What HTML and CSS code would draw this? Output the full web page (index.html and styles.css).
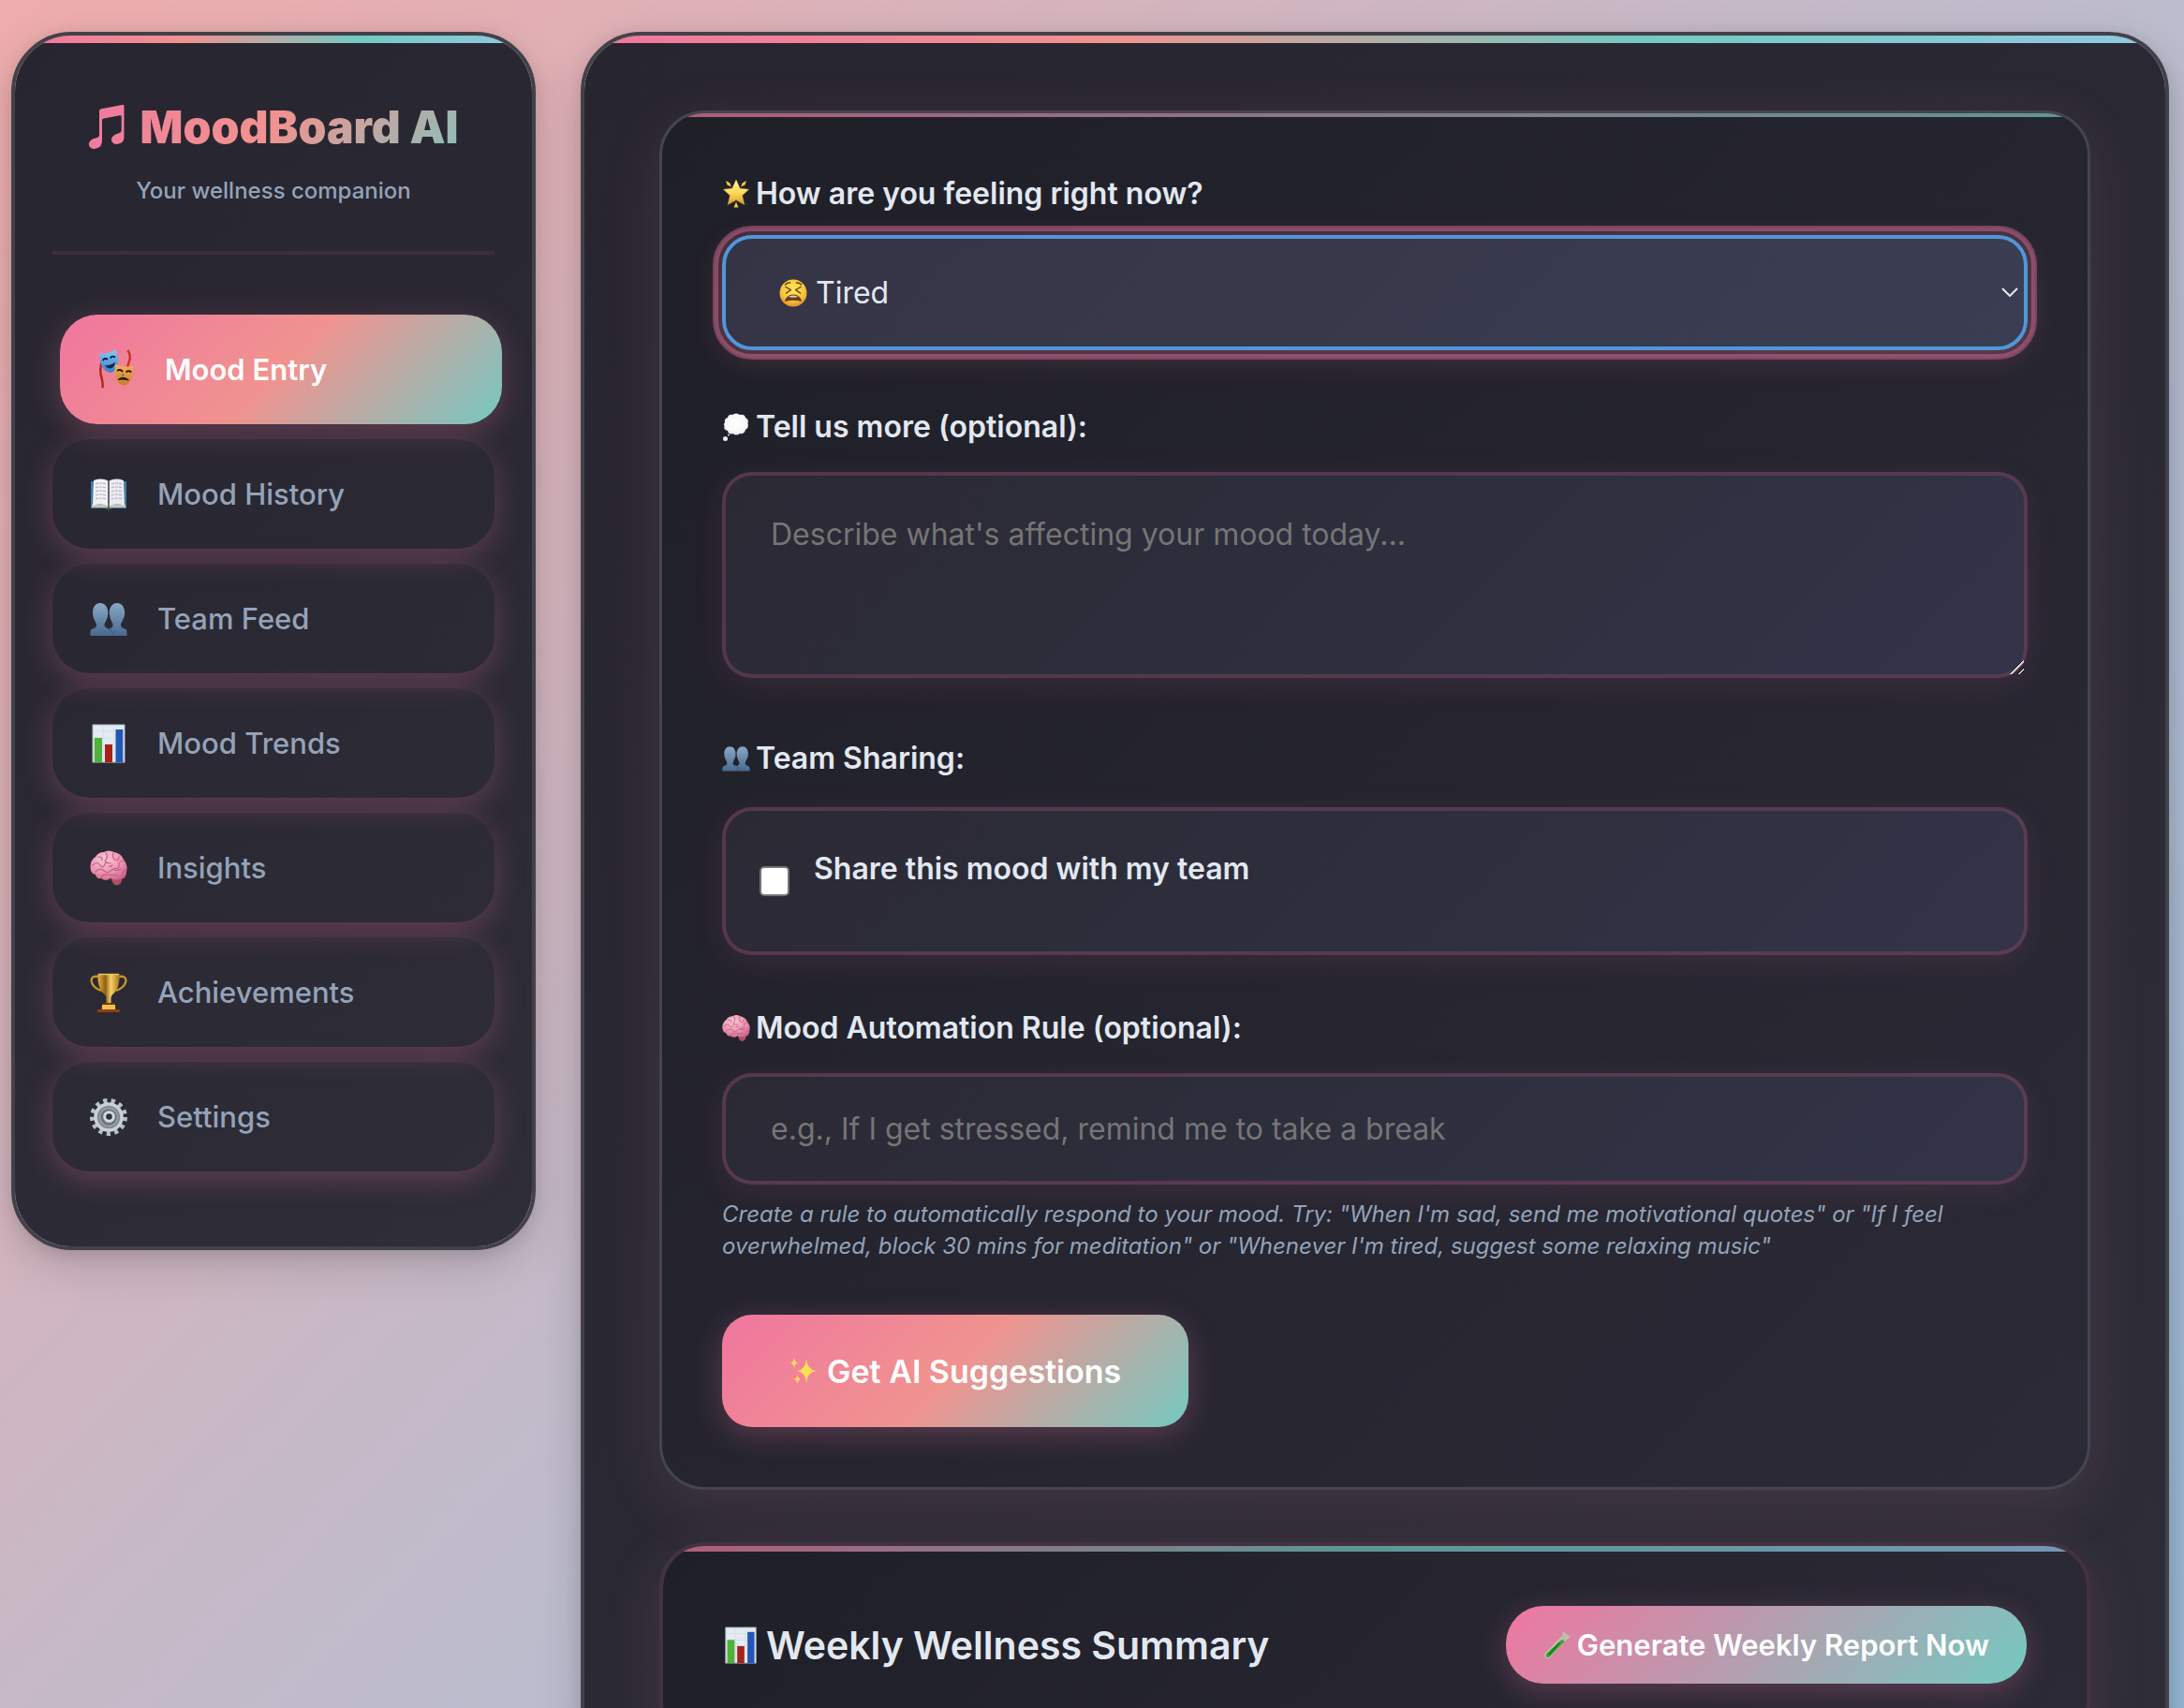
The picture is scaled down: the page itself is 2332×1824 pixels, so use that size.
FILE: index.html
```html
<!DOCTYPE html>
<html lang="en">
<head>
<meta charset="utf-8">
<title>MoodBoard AI</title>
<link rel="stylesheet" href="styles.css">
</head>
<body>
<svg class="sprite" aria-hidden="true">
  <defs>
    <linearGradient id="gold" x1="0" y1="0" x2="0" y2="1"><stop offset="0" stop-color="#fff7a8"/><stop offset=".5" stop-color="#fbdc5c"/><stop offset="1" stop-color="#e39a2c"/></linearGradient>
    <linearGradient id="cup" x1="0" y1="0" x2="1" y2="0"><stop offset="0" stop-color="#e8b53a"/><stop offset=".35" stop-color="#8f5f12"/><stop offset=".6" stop-color="#f6d264"/><stop offset="1" stop-color="#a8741a"/></linearGradient>
    <linearGradient id="steel" x1="0" y1="0" x2="0" y2="1"><stop offset="0" stop-color="#89a9c6"/><stop offset="1" stop-color="#48688f"/></linearGradient>
    <linearGradient id="maskBlue" x1="0" y1="0" x2="0" y2="1"><stop offset="0" stop-color="#8cc8f4"/><stop offset="1" stop-color="#2f7fd0"/></linearGradient>
    <linearGradient id="maskGold" x1="0" y1="0" x2="0" y2="1"><stop offset="0" stop-color="#f3b757"/><stop offset="1" stop-color="#c97a26"/></linearGradient>
    <radialGradient id="face" cx=".5" cy=".35" r=".7"><stop offset="0" stop-color="#ffe957"/><stop offset=".6" stop-color="#f8c63d"/><stop offset="1" stop-color="#dc8527"/></radialGradient>
    <radialGradient id="pinkBrain" cx=".4" cy=".3" r=".8"><stop offset="0" stop-color="#fbc6d8"/><stop offset=".6" stop-color="#ec90ae"/><stop offset="1" stop-color="#c65d83"/></radialGradient>
    <radialGradient id="cloud" cx=".5" cy=".45" r=".6"><stop offset="0" stop-color="#ffffff"/><stop offset=".75" stop-color="#f6f6f8"/><stop offset="1" stop-color="#c9cbd2"/></radialGradient>
    <linearGradient id="noteFill" x1="0" y1="0" x2="1" y2="1"><stop offset="0" stop-color="#ef7aa0"/><stop offset="1" stop-color="#f07f9b"/></linearGradient>
  </defs>
  <symbol id="i-note" viewBox="0 0 40 50">
    <path fill="url(#noteFill)" d="M12 7.500Q12 5.600 14 5.200L36.500.900Q38.500.600 38.500 2.500V35Q38.500 40 35 41.800Q30.500 44 27 42Q24 39.800 25.500 36Q27.500 32.500 32 31.500Q35.700 30.800 35.700 28V13.300Q35.700 11.900 34 12.200L16.600 15.600Q15 15.900 15 17.500V38.500Q15 44.500 11 46.800Q6.500 49 3 47Q-.200 44.500 1.300 41Q3.500 37.500 8 36.600Q12 35.800 12 33Z"/>
  </symbol>
  <symbol id="i-masks" viewBox="0 0 40 46">
    <path d="M4.500 13Q1 22 3.500 31T4.500 43" fill="none" stroke="#b3271d" stroke-width="2.600"/>
    <path d="M33 1Q37 8 34.500 14T34 20" fill="none" stroke="#c93428" stroke-width="2.600"/>
    <path d="M1.500 5Q10 5.500 19.500.500Q23 8 22 16Q20 25 14.500 26Q8 25.500 4 19Q1 12 1.500 5Z" fill="url(#maskBlue)"/>
    <path d="M5 12.500Q7.500 9 10.500 11.500M13.500 10Q15.500 6.500 19 9" fill="none" stroke="#0e1c34" stroke-width="2"/>
    <path d="M7.500 17.500Q13 19.500 19 14.500Q18 21 13.500 21.500Q9.500 21.500 7.500 17.500Z" fill="#14253f"/>
    <path d="M19 17Q29 21.500 39 18.500Q39.500 27 36.500 34Q32.500 41 27 40Q20.500 38 19 29Q18 22 19 17Z" fill="url(#maskGold)"/>
    <path d="M21 24Q24.500 21.500 27.500 25M31 25.500Q34 23 37 25.500" fill="none" stroke="#2b1606" stroke-width="2"/>
    <path d="M22.500 34Q27.500 29 34 34.500Q27.500 32.500 22.500 34Z" fill="#2b1606" stroke="#2b1606" stroke-width="1.200"/>
    <path d="M28 27.500L27 30" stroke="#7d4915" stroke-width="1.200"/>
  </symbol>
  <symbol id="i-book" viewBox="0 0 40 40">
    <path d="M1 6H39V35H23Q20 38 17 35H1Z" fill="#3f7ba8"/>
    <path d="M2 31H38V34H23Q20 36.500 17 34H2Z" fill="#c9c3b2"/>
    <path d="M4 5Q13 2 19.500 5.500V32.500Q13 29 3 32Z" fill="#f2f1f4"/>
    <path d="M36 5Q27 2 20.500 5.500V32.500Q27 29 37 32Z" fill="#eceaf0"/>
    <path d="M20 5.500V33" stroke="#55535c" stroke-width="1.600"/>
    <path d="M6 9Q11 7 17 9M6 13Q11 11 17 13M6 17Q11 15 17 17M6 21Q11 19 17 21M6 25Q11 23 17 25M23 9Q29 7 34 9M23 13Q29 11 34 13M23 17Q29 15 34 17M23 21Q29 19 34 21M23 25Q29 23 34 25" fill="none" stroke="#b5b3bd" stroke-width="1.200" stroke-dasharray="3 1"/>
    <circle cx="20" cy="35" r="1.800" fill="#54451c"/>
  </symbol>
  <symbol id="i-people" viewBox="0 0 40 40">
    <path fill="url(#steel)" d="M11 3C6 3 2.800 7.500 3 14C3.200 19 5.500 22 7 25.500Q7.500 29 3.500 30.200Q.500 31 .500 34V38H22V34Q22 31 19.500 30.200Q15 29 15.500 25.500C17 22 19.200 19 19.400 14C19.500 7.500 16 3 11 3Z"/>
    <path fill="url(#steel)" d="M29 3C24 3 20.600 7.500 20.800 14C21 19 23 22 24.500 25.500Q25 29 21.500 30.200Q20 30.600 19.500 31.400Q22 33 22 35V38H39.500V34Q39.500 31 36.500 30.200Q32.500 29 33 25.500C34.500 22 37 19 37.200 14C37.400 7.500 34 3 29 3Z"/>
    <path d="M19 31Q24 32 25.500 36" fill="none" stroke="#3a5577" stroke-width=".800"/>
  </symbol>
  <symbol id="i-chart" viewBox="0 0 40 42">
    <rect x="3" y="1" width="34" height="40" fill="#e3ebf3" stroke="#aeb7c2" stroke-width="1"/>
    <path d="M3 8H37M3 15H37M3 22H37M3 29H37M14 1V41M25.500 1V41" stroke="#cfdae5" stroke-width=".700"/>
    <rect x="4.800" y="15" width="8.200" height="26" fill="#50b23a"/>
    <rect x="16" y="22" width="8" height="19" fill="#a82219"/>
    <rect x="27.500" y="6" width="7.800" height="35" fill="#2257b8"/>
  </symbol>
  <symbol id="i-brain" viewBox="0 0 40 40">
    <path d="M23 32Q29 27 34 30Q35 38 28 38.500Q24 37 23 32Z" fill="#b04f62"/>
    <path d="M.500 20Q0 12 6 8Q9 3 15 3Q20-.200 26 3Q33 4 36 11Q41 17 39 24Q39 31 33 32Q26 34 22 31Q17 35 12 31Q7 32 6 27Q1 26 .500 20Z" fill="url(#pinkBrain)"/>
    <path d="M3 17Q8 12 11 17T17 14M9 8Q14 8 13 12M17 4Q20 8 17 11T22 15M25 4Q23 9 27 11T31 8M36 12Q31 12 31 17T26 20M6 24Q10 19 15 23T24 21Q28 24 33 21M38 22Q34 24 35 28M12 30Q13 26 19 27T29 27M20 18Q22 19 24 17" fill="none" stroke="#bd6285" stroke-width="1.200" stroke-linecap="round"/>
  </symbol>
  <symbol id="i-trophy" viewBox="0 0 40 42">
    <path d="M9 4Q2 2.500 1.500 8Q2 15 12 19M31 4Q38 2.500 38.500 8Q38 15 28 19" fill="none" stroke="#c8932a" stroke-width="2.400"/>
    <path d="M8.500 1H31.500Q32 15 26.500 21Q22.500 24 22.500 27V33H17.500V27Q17.500 24 13.500 21Q8 15 8.500 1Z" fill="url(#cup)"/>
    <path d="M9 1.500H31" stroke="#f0c65a" stroke-width="1.500"/>
    <path d="M14 32H26L29 40H11Z" fill="#7a3413"/>
    <rect x="13" y="34" width="14" height="5" fill="#f0c04c"/>
    <rect x="8" y="39" width="24" height="3" rx="1" fill="#8b4016"/>
  </symbol>
  <symbol id="i-gear" viewBox="0 0 40 40">
    <circle cx="20" cy="20" r="17.500" fill="none" stroke="#b6c1c9" stroke-width="5" stroke-dasharray="4.200 4.258"/>
    <circle cx="20" cy="20" r="14" fill="#838b91" stroke="#c9d1d7" stroke-width="3.500"/>
    <circle cx="20" cy="20" r="9.500" fill="#6d757b" stroke="#99a2a9" stroke-width="1.500"/>
    <circle cx="20.500" cy="19.500" r="4.800" fill="#2f343b" stroke="#d4dbe0" stroke-width="3"/>
  </symbol>
  <symbol id="i-star" viewBox="0 0 30 32">
    <path d="M15 1L19.200 10.200L28.500 11.300L21.500 17.800L23.800 27.500L15 22.600L6.200 27.500L8.500 17.800L1.500 11.300L10.800 10.200Z" fill="url(#gold)" stroke="#e9b53c" stroke-width=".500" stroke-linejoin="round"/>
    <path d="M4 2L8.500 4.500L9.800 8.500L5.500 6.500ZM26 2L21.500 4.500L20.200 8.500L24.500 6.500ZM15 24.500L17.500 30.500H12.500Z" fill="#f3c646"/>
  </symbol>
  <symbol id="i-thought" viewBox="0 0 30 32">
    <path d="M3 11Q2 7 6 6Q7 2 11 3Q15 0 19 3Q24 2 25 6Q29 8 27.500 12Q29 17 25 19Q24 24 19 23Q15 26 11.500 23Q7 25 6 20Q1 19 2.500 15Q1 13 3 11Z" fill="url(#cloud)"/>
    <circle cx="3.500" cy="28.500" r="2.500" fill="#ececf0"/><circle cx="7" cy="24.500" r="1" fill="#dddde2"/>
  </symbol>
  <symbol id="i-tired" viewBox="0 0 30 30">
    <circle cx="15" cy="15" r="14.500" fill="url(#face)"/>
    <path d="M7 8.500L12.500 11.500L7.500 15M23 8.500L17.500 11.500L22.500 15M6.500 6Q9 3.500 11.500 4M23.500 6Q21 3.500 18.500 4" fill="none" stroke="#5d330b" stroke-width="1.400" stroke-linecap="round" stroke-linejoin="round"/>
    <path d="M6 24Q7.500 16.500 15 16.500T24 24Q15 21.500 6 24Z" fill="#6b3b14"/>
    <path d="M9.500 19Q15 16 20.500 19Q15 20.500 9.500 19Z" fill="#c9cfdb"/>
  </symbol>
  <symbol id="i-sparkles" viewBox="0 0 30 30">
    <path d="M18 2Q18.800 13.500 28.500 15Q18.800 16.500 18 28Q17.200 16.500 8 15Q17.200 13.500 18 2ZM5 1Q5.500 5.500 9 6.500Q5.500 7.500 5 12Q4.500 7.500 1 6.500Q4.500 5.500 5 1ZM8.500 19Q9 23 12 24Q9 25 8.500 29Q8 25 5 24Q8 23 8.500 19Z" fill="#fcdf58"/>
  </symbol>
  <symbol id="i-tube" viewBox="0 0 30 30">
    <path d="M22.500 3L27 6L7 27.500Q4.500 29.500 2.500 28Q1 26 2.500 23.500Z" fill="#a9d6a6" fill-opacity=".7" stroke="#cfe3d0" stroke-width=".700"/>
    <path d="M19.500 9L23 10.500L7 27Q4.500 28.800 3 27.500Q2 26 3.200 24Z" fill="#35a52f"/>
    <path d="M17 12.500L6 25" stroke="#1f6f1f" stroke-width="1.600"/>
    <path d="M21 1.500L28 6.500" stroke="#c3b9c0" stroke-width="1.600" stroke-linecap="round"/>
  </symbol>
</svg>

<div class="layout">
  <aside class="sidebar">
    <header class="brand">
      <h1 class="brand-title"><svg class="brand-note" aria-hidden="true"><use href="#i-note"/></svg>MoodBoard AI</h1>
      <p class="brand-tagline">Your wellness companion</p>
    </header>
    <nav class="nav">
      <button type="button" class="nav-item active"><svg class="nav-icon" aria-hidden="true"><use href="#i-masks"/></svg>Mood Entry</button>
      <button type="button" class="nav-item"><svg class="nav-icon" aria-hidden="true"><use href="#i-book"/></svg>Mood History</button>
      <button type="button" class="nav-item"><svg class="nav-icon" aria-hidden="true"><use href="#i-people"/></svg>Team Feed</button>
      <button type="button" class="nav-item"><svg class="nav-icon" aria-hidden="true"><use href="#i-chart"/></svg>Mood Trends</button>
      <button type="button" class="nav-item"><svg class="nav-icon" aria-hidden="true"><use href="#i-brain"/></svg>Insights</button>
      <button type="button" class="nav-item"><svg class="nav-icon" aria-hidden="true"><use href="#i-trophy"/></svg>Achievements</button>
      <button type="button" class="nav-item"><svg class="nav-icon" aria-hidden="true"><use href="#i-gear"/></svg>Settings</button>
    </nav>
  </aside>

  <main class="main">
    <form class="card entry">
      <div class="field field-mood">
        <label class="label" for="mood"><svg class="label-icon" aria-hidden="true"><use href="#i-star"/></svg>How are you feeling right now?</label>
        <div class="select-wrap">
          <select id="mood" class="control select">
            <option>Tired</option>
            <option>Happy</option>
            <option>Calm</option>
            <option>Stressed</option>
          </select>
          <svg class="select-face" aria-hidden="true"><use href="#i-tired"/></svg>
          <svg class="select-arrow" viewBox="0 0 18 10" aria-hidden="true"><path d="M1 1L9 9L17 1" fill="none" stroke="#e2e8f0" stroke-width="2"/></svg>
        </div>
      </div>

      <div class="field field-notes">
        <label class="label" for="notes"><svg class="label-icon" aria-hidden="true"><use href="#i-thought"/></svg>Tell us more (optional):</label>
        <textarea id="notes" class="control textarea" placeholder="Describe what's affecting your mood today..."></textarea>
      </div>

      <fieldset class="field field-share">
        <legend class="label"><svg class="label-icon" aria-hidden="true"><use href="#i-people"/></svg>Team Sharing:</legend>
        <div class="control share">
          <input id="share" class="checkbox" type="checkbox">
          <label class="share-label" for="share">Share this mood with my team</label>
        </div>
      </fieldset>

      <div class="field field-rule">
        <label class="label" for="rule"><svg class="label-icon" aria-hidden="true"><use href="#i-brain"/></svg>Mood Automation Rule (optional):</label>
        <input id="rule" class="control input" type="text" placeholder="e.g., If I get stressed, remind me to take a break">
        <p class="hint">Create a rule to automatically respond to your mood. Try: "When I'm sad, send me motivational quotes" or "If I feel overwhelmed, block 30 mins for meditation" or "Whenever I'm tired, suggest some relaxing music"</p>
      </div>

      <button type="button" class="submit"><svg class="label-icon" aria-hidden="true"><use href="#i-sparkles"/></svg>Get AI Suggestions</button>
    </form>

    <section class="card summary">
      <h2 class="summary-title"><svg class="summary-icon" aria-hidden="true"><use href="#i-chart"/></svg>Weekly Wellness Summary</h2>
      <button type="button" class="report"><svg class="label-icon" aria-hidden="true"><use href="#i-tube"/></svg>Generate Weekly Report Now</button>
    </section>
  </main>
</div>
</body>
</html>
```
FILE: styles.css
```css
:root {
  --pink: #f0769f;
  --peach: #f0938f;
  --teal: #74c9c1;
  --sky: #92c8e2;
  --text: #e2e8f0;
  --muted: #94a3b8;
  --glow: rgba(240, 118, 160, .27);
  --glow-soft: rgba(240, 118, 160, .1);
  --edge: rgba(240, 118, 175, .25);
}

* { box-sizing: border-box; }

body {
  margin: 0;
  color: var(--text);
  font-family: Inter, "Liberation Sans", sans-serif;
  background: linear-gradient(135deg, #efacac 0%, #bdbccd 55%, #96b7d4 100%) fixed;
}

button, input, select, textarea { font-family: inherit; }

.sprite { position: absolute; width: 0; height: 0; }

.layout {
  display: flex;
  align-items: flex-start;
  gap: 48px;
  height: 100vh;
  padding: 34px 16px 0 12px;
  overflow: hidden;
}

.sidebar, .main {
  position: relative;
  border: 4px solid #424149;
  border-radius: 64px;
  background: linear-gradient(135deg, #27252f, #2e2d38);
  background-clip: padding-box;
  box-shadow: 0 16px 48px rgba(0, 0, 0, .16), 0 4px 16px rgba(0, 0, 0, .1);
  overflow: hidden;
}

.sidebar::before, .main::before, .card::before {
  content: "";
  position: absolute;
  inset: 0 0 auto;
  height: 8px;
  background: linear-gradient(90deg, var(--pink), var(--peach), var(--teal), var(--sky));
}

.sidebar { flex: 0 0 560px; padding: 56px 40px 80px; }

.brand {
  padding-bottom: 46px;
  border-bottom: 4px solid #3e2e3d;
  text-align: center;
}

.brand-title {
  display: flex;
  align-items: center;
  justify-content: center;
  gap: 15px;
  margin: 0;
  font-size: 48px;
  line-height: 84px;
  font-weight: 900;
  color: transparent;
  background: linear-gradient(135deg, var(--pink), var(--peach) 50%, var(--teal));
  background-clip: text;
}

.brand-note { width: 40px; height: 50px; }

.brand-tagline {
  margin: 8px 0 0;
  font-size: 24px;
  line-height: 36px;
  font-weight: 500;
  color: var(--muted);
}

.nav { display: grid; gap: 16px; margin-top: 64px; }

.nav-item {
  display: flex;
  align-items: center;
  gap: 32px;
  height: 117px;
  padding: 0 40px;
  border: 0;
  border-radius: 40px;
  background: transparent;
  box-shadow: 0 8px 32px var(--glow);
  color: var(--muted);
  font-size: 31px;
  font-weight: 500;
  text-align: left;
}

.nav-item.active {
  margin: 0 -8px 0 8px;
  background: linear-gradient(135deg, var(--pink), var(--peach) 50%, var(--teal));
  color: #fff;
  font-weight: 600;
}

.nav-icon { width: 40px; height: 44px; }

.main { flex: 1; min-width: 0; padding: 80px; }

.card {
  position: relative;
  padding: 64px;
  border: 3px solid #45454d;
  border-radius: 48px;
  background: linear-gradient(135deg, #1f1f28, #2b2a36);
  background-clip: padding-box;
  box-shadow: 0 16px 64px rgba(240, 160, 180, .12);
  overflow: hidden;
}

.card::before {
  height: 4px;
  background: linear-gradient(90deg, var(--pink), var(--teal));
  opacity: .7;
}

.field { margin: 0; padding: 0; border: 0; }
.field-mood { margin-bottom: 60px; }
.field-notes { margin-bottom: 64px; }
.field-share { margin-bottom: 56px; }
.field-rule { margin-bottom: 56px; }

.label {
  display: flex;
  align-items: center;
  gap: 6px;
  margin-bottom: 26px;
  padding: 0;
  font-size: 32px;
  line-height: 44px;
  font-weight: 600;
}

.field-mood .label { margin-bottom: 22px; }
.field-share .label { margin-bottom: 30px; }

.label-icon { flex: none; width: 30px; height: 32px; }

.control {
  display: block;
  width: 100%;
  border: 4px solid var(--edge);
  border-radius: 32px;
  background: linear-gradient(135deg, #2b2934, #2d2f3d 50%, #333449) padding-box;
  box-shadow: 0 8px 32px var(--glow-soft);
  color: var(--text);
  font-size: 32px;
}

.control::placeholder { color: #757575; opacity: 1; }

.select-wrap { position: relative; }

.select {
  appearance: none;
  height: 123px;
  padding: 0 56px 0 96px;
  border-color: #5197d8;
  outline: 6px solid rgba(240, 118, 160, .4);
  outline-offset: 4px;
  background: linear-gradient(135deg, #343445, #3b3e52) padding-box;
  box-shadow: 0 0 0 8px rgba(240, 118, 160, .14), 0 8px 32px rgba(240, 118, 160, .2);
}

.select-face {
  position: absolute;
  left: 61px;
  top: 47px;
  width: 30px;
  height: 30px;
}

.select-arrow {
  position: absolute;
  right: 10px;
  top: 56px;
  width: 18px;
  height: 10px;
}

.textarea {
  height: 220px;
  padding: 40px 48px;
  line-height: 46px;
  resize: vertical;
}

.textarea::-webkit-resizer {
  background: linear-gradient(135deg, transparent 46%, #111 46% 50%, #cfcbd2 50% 58%, transparent 58% 74%, #111 74% 78%, #cfcbd2 78% 86%, transparent 86%);
}

.share {
  display: flex;
  align-items: center;
  gap: 26px;
  height: 158px;
  padding: 0 32px;
}

.checkbox {
  appearance: none;
  width: 32px;
  height: 32px;
  margin: 0 0 0 4px;
  border: 2px solid #757575;
  border-radius: 5px;
  background: #fff;
}

.share-label {
  margin-bottom: 26px;
  font-size: 32px;
  line-height: 44px;
  font-weight: 600;
}

.input { height: 119px; padding: 0 48px; }

.hint {
  margin: 15px 0 0;
  color: var(--muted);
  font-size: 24px;
  line-height: 34px;
  font-style: italic;
}

.submit, .report {
  display: flex;
  align-items: center;
  gap: 10px;
  border: 0;
  color: #fff;
  font-weight: 600;
  box-shadow: 0 8px 32px var(--glow);
}

.submit {
  height: 120px;
  padding: 0 72px;
  border-radius: 32px;
  background: linear-gradient(135deg, var(--pink), var(--peach) 50%, var(--teal));
  font-size: 34px;
}

.summary {
  display: flex;
  align-items: center;
  justify-content: space-between;
  margin-top: 56px;
  border: 4px solid #44323f;
}

.summary::before {
  height: 6px;
  background: linear-gradient(90deg, var(--pink), var(--teal), #96c6ee);
}

.summary-title {
  display: flex;
  align-items: center;
  gap: 8px;
  margin: 0;
  font-size: 41px;
  font-weight: 600;
}

.summary-icon { width: 38px; height: 40px; }

.report {
  gap: 6px;
  height: 83px;
  padding: 0 40px;
  border-radius: 40px;
  background: linear-gradient(135deg, var(--pink), var(--teal));
  font-size: 31px;
}
```
